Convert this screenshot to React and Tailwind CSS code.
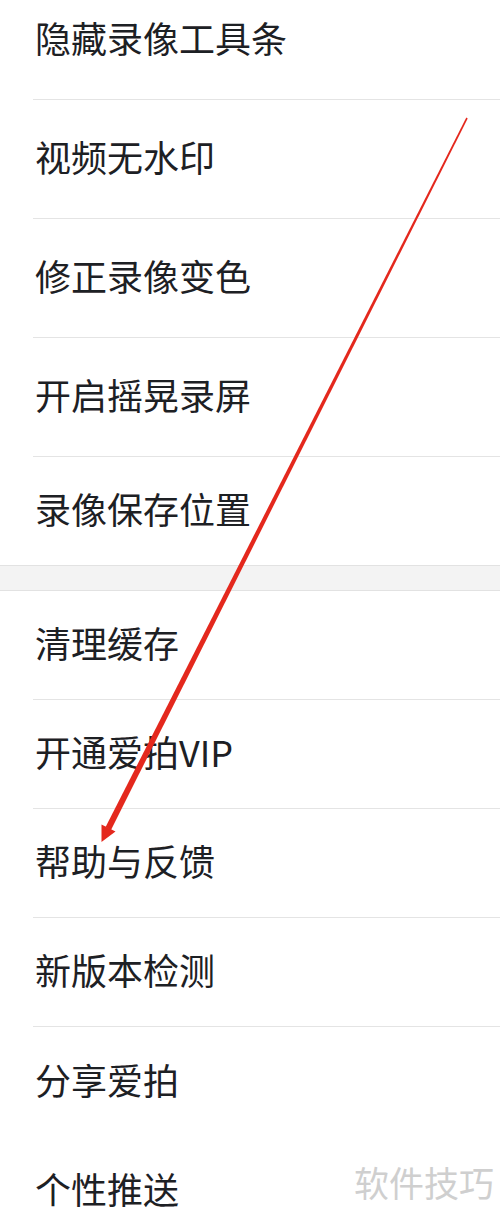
import React from "react";

const topItems = ["隐藏录像工具条", "视频无水印", "修正录像变色", "开启摇晃录屏", "录像保存位置"];
const bottomItems = ["清理缓存", "开通爱拍VIP", "帮助与反馈", "新版本检测", "分享爱拍", "个性推送"];

function Row({ label, height, divider }) {
    return (
        <div className={`${height} flex flex-col`}>
            <div className="flex-1 flex items-center pl-[35px] pb-[6px]">
                <span className="text-[36px] leading-none text-[#1d2024]">{label}</span>
            </div>
            {divider && <div className="ml-[33px] h-px bg-[#e4e4e4]" />}
        </div>
    );
}

export default function App() {
    return (
        <div
            className="relative w-[500px] h-[1221px] overflow-hidden bg-white"
            style={{ fontFamily: '"Noto Sans CJK SC", "Noto Sans", sans-serif' }}
        >
            <div className="-mt-[19px]">
                {/* first group */}
                {topItems.map((t, i) => (
                    <Row
                        key={t}
                        label={t}
                        height={i === topItems.length - 1 ? "h-[108px]" : "h-[119px]"}
                        divider={i < topItems.length - 1}
                    />
                ))}

                {/* section gap */}
                <div className="h-[26px] bg-[#f3f3f3] border-y border-[#e2e2e2]" />

                {/* second group */}
                {bottomItems.map((t, i) => (
                    <Row key={t} label={t} height="h-[109px]" divider={i < 4} />
                ))}
            </div>

            {/* red annotation arrow */}
            <svg className="absolute inset-0 pointer-events-none" width="500" height="1221" viewBox="0 0 500 1221">
                <polygon
                    points="467.7,118.4 466.3,117.6 105.6,827.1 111.0,829.9"
                    fill="#e4281d"
                />
                <polygon points="101.5,842 115.5,831.5 101.5,824.5" fill="#e4281d" />
            </svg>

            {/* watermark */}
            <span className="absolute right-[6px] top-[1164px] text-[35px] leading-none text-[#cfcfcf]">
                软件技巧
            </span>
        </div>
    );
}
